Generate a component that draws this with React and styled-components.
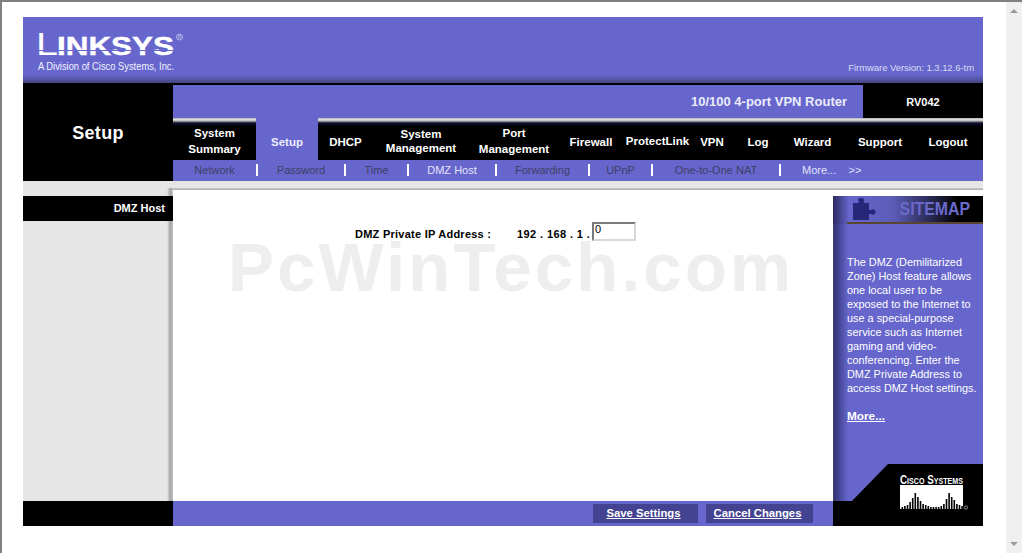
import React from 'react'
import styled, { createGlobalStyle } from 'styled-components'

const Global = createGlobalStyle`
html, body { margin: 0; padding: 0; background: #fff; overflow: hidden; }
body { font-family: "Liberation Sans", Arial, sans-serif; }
`

const Win = styled.div`
width: 1022px;
height: 553px;
box-sizing: border-box;
display: flex;
border-top: 2px solid #808080;
border-left: 2px solid #808080;
background: #fff;
`
const Viewport = styled.div`
flex: 1;
padding: 15px 0 0 21px;
`
const Scrollbar = styled.div`
width: 16px;
background: #f0f0f0;
display: flex;
flex-direction: column;
justify-content: space-between;
align-items: center;
padding: 7px 0;
box-sizing: border-box;
`
const ScrollArrow = styled.div`
width: 0;
height: 0;
border-left: 4px solid transparent;
border-right: 4px solid transparent;
border-top: ${p => p.$up ? 0 : '4px solid #9a9a9a'};
border-bottom: ${p => p.$up ? '4px solid #9a9a9a' : 0};
`
const Page = styled.div`
width: 960px;
`
const Header = styled.div`
height: 66px;
background: linear-gradient(to bottom, #6666cc 0, #6666cc 58px, #5a5ab0 61px, #44447f 66px);
display: flex;
justify-content: space-between;
padding: 9px 9px 0 15px;
box-sizing: border-box;
`
const LogoBox = styled.div`
display: flex;
flex-direction: column;
`
const LogoMark = styled.svg`
margin-left: -3px;
`
const Tagline = styled.div`
color: #f2f2ff;
font-size: 11px;
line-height: 12px;
margin-top: -2px;
white-space: nowrap;
transform: scaleX(0.85);
transform-origin: left center;
`
const Firmware = styled.div`
align-self: flex-end;
margin-bottom: 9px;
color: #dcdcf4;
font-size: 9.5px;
line-height: 12px;
letter-spacing: -0.05px;
`
const Masthead = styled.div`
display: grid;
grid-template-columns: 150px 810px;
height: 98px;
background: #000;
`
const SectionName = styled.div`
display: flex;
align-items: center;
justify-content: center;
color: #fff;
font-size: 18px;
font-weight: bold;
letter-spacing: 0.3px;
padding-top: 3px;
`
const MastRight = styled.div`
padding-top: 2px;
display: flex;
flex-direction: column;
`
const TitleRow = styled.div`
height: 33px;
display: flex;
`
const ProductName = styled.div`
width: 690px;
background: #6666cc;
color: #ececfa;
font-size: 13px;
font-weight: bold;
display: flex;
align-items: center;
justify-content: flex-end;
padding-right: 16px;
box-sizing: border-box;
`
const ModelName = styled.div`
flex: 1;
color: #fff;
font-size: 11px;
font-weight: bold;
display: flex;
align-items: center;
justify-content: center;
padding-top: 1px;
`
const Nav = styled.div`
height: 42px;
display: flex;
background: linear-gradient(to bottom, #9a9a9a 0, #e6e6e6 1px, #b8b8b8 3px, #555 4px, #101040 5px, #000 8px);
`
const NavItem = styled.div`
width: ${p => p.$w}px;
background: ${p => p.$active ? '#6666cc' : 'transparent'};
color: ${p => p.$active ? '#eeeeff' : '#fff'};
font-size: 11.5px;
font-weight: bold;
line-height: ${p => p.$lh || 15}px;
text-align: center;
padding-top: ${p => p.$top}px;
box-sizing: border-box;
white-space: nowrap;
`
const SubNav = styled.div`
height: 21px;
background: #6666cc;
display: flex;
align-items: center;
padding-bottom: 1px;
box-sizing: border-box;
`
const SubItem = styled.div`
width: ${p => p.$w}px;
height: 12px;
box-sizing: border-box;
border-right: ${p => p.$last ? 0 : 2}px solid #fff;
color: ${p => p.$on ? '#e4e4fa' : '#3f3f66'};
font-size: 11px;
line-height: 12px;
text-align: ${p => p.$pad ? 'left' : 'center'};
padding-left: ${p => p.$pad || 0}px;
white-space: nowrap;
`
const Body = styled.div`
display: grid;
grid-template-columns: 150px 660px 150px;
grid-template-rows: 15px 305px 25px;
`
const Rail = styled.div`
grid-column: 1;
grid-row: 1 / 3;
padding-top: 15px;
background:
  linear-gradient(to right, transparent 0, transparent 144px, #a8a8a8 147px, #b0b0b0 149px, #d0d0d0 150px) 0 7px no-repeat,
  #e6e6e6;
`
const RailTitle = styled.div`
height: 25px;
background: #000;
color: #fff;
font-size: 11px;
font-weight: bold;
display: flex;
align-items: center;
justify-content: flex-end;
padding: 0 8px 2px 0;
box-sizing: border-box;
`
const Band = styled.div`
grid-column: 2 / 4;
grid-row: 1;
background: linear-gradient(to bottom, #e6e6e6 0, #e6e6e6 7px, #a4a4a4 8px, #c4c4c4 9px, #fff 9px);
`
const Content = styled.div`
grid-column: 2;
grid-row: 2;
position: relative;
background: #fff;
overflow: hidden;
`
const Watermark = styled.div`
position: absolute;
left: 55px;
top: 46px;
color: #eeeeee;
font-size: 69px;
font-weight: bold;
letter-spacing: 3px;
line-height: 52px;
white-space: nowrap;
`
const FieldRow = styled.div`
display: flex;
align-items: flex-start;
padding: 26px 0 0 182px;
position: relative;
`
const FieldLabel = styled.div`
width: 162px;
padding-top: 5px;
color: #000;
font-size: 11px;
font-weight: bold;
letter-spacing: 0.25px;
line-height: 14px;
white-space: nowrap;
`
const Octets = styled.div`
width: 75px;
padding-top: 5px;
color: #000;
font-size: 11px;
font-weight: bold;
letter-spacing: 0.4px;
line-height: 14px;
white-space: pre;
`
const IpInput = styled.input`
width: 44px;
height: 19px;
box-sizing: border-box;
border: 2px solid;
border-color: #7a7a7a #d8d8d8 #d8d8d8 #7a7a7a;
font-family: "Liberation Sans", Arial, sans-serif;
font-size: 11px;
padding: 0 0 5px 1px;
color: #000;
background: #fff;
outline: none;
`
const Sidebar = styled.div`
grid-column: 3;
grid-row: 2 / 4;
display: flex;
flex-direction: column;
background: linear-gradient(to right, #555 0, #333377 1px, #6666cc 15px);
`
const SitemapHead = styled.div`
height: 28px;
box-sizing: border-box;
display: flex;
align-items: center;
justify-content: space-between;
padding: 0 13px 2px 20px;
background:
  linear-gradient(to top, #5a4630 0, #5a4630 2px, transparent 2px) 14px 0 no-repeat,
  linear-gradient(to right, #2a2a60 0, #6666cc 16px, #5c5cb8 60px, #26264c 100px, #000 125px);
`
const SitemapTitle = styled.div`
color: #6a6acc;
font-size: 18px;
font-weight: bold;
transform: scaleX(0.88);
transform-origin: right center;
`
const SideText = styled.div`
padding: 31px 0 0 14px;
color: #fff;
font-size: 10.9px;
line-height: 14px;
white-space: nowrap;
flex: 1;
`
const MoreLink = styled.a`
display: inline-block;
margin-top: 14px;
color: #fff;
font-size: 11.8px;
font-weight: bold;
text-decoration: underline;
`
const CiscoCorner = styled.div`
height: 62px;
position: relative;
display: flex;
justify-content: flex-end;
padding: 8px 11px 0 0;
box-sizing: border-box;
&::before {
  content: '';
  position: absolute;
  inset: 0;
  background: #000;
  clip-path: polygon(19px 37px, 55px 0, 150px 0, 150px 62px, 0 62px, 0 37px);
}
`
const CiscoMark = styled.svg`
position: relative;
`
const FootLeft = styled.div`
grid-column: 1;
grid-row: 3;
background: #000;
`
const FootBar = styled.div`
grid-column: 2;
grid-row: 3;
background: #6666cc;
display: flex;
justify-content: flex-end;
align-items: center;
gap: 8px;
padding: 0 20px 1px 0;
`
const ActionButton = styled.a`
width: ${p => p.$w}px;
height: 19px;
box-sizing: border-box;
padding-right: 4px;
background: #434392;
color: #fff;
font-size: 11.3px;
font-weight: bold;
text-decoration: underline;
display: flex;
align-items: center;
justify-content: center;
`

const Logo = () => (
  <LogoMark width="149" height="36" viewBox="0 0 149 36">
    <text x="1" y="29" fill="#fff" fontFamily="Liberation Sans" fontWeight="400" fontSize="32" textLength="22" lengthAdjust="spacingAndGlyphs">L</text>
    <text x="22" y="29" fill="#fff" stroke="#fff" strokeWidth="0.4" fontFamily="Liberation Sans" fontWeight="700" fontSize="25" textLength="117" lengthAdjust="spacingAndGlyphs">INKSYS</text>
    <rect x="3" y="24" width="137" height="1" fill="#6666cc" />
    <circle cx="144.5" cy="11" r="3" fill="none" stroke="#c8c8ee" strokeWidth="0.8" />
    <text x="142.8" y="13" fill="#c8c8ee" fontFamily="Liberation Sans" fontSize="5">R</text>
  </LogoMark>
)

const Puzzle = () => (
  <svg width="23" height="22" viewBox="0 0 23 22">
    <path fill="#26267a" d="M0 5H5C6 5 6 4 5.5 3C4 1 6 0 8 0C10 0 12 1 11 3C10.5 4 10.5 5 12 5H16V11C16 12 17 12.5 18 12C20 10.5 22.5 11.5 22.5 14C22.5 16.5 20 17.5 18 16C17 15.5 16 16 16 17V22H0Z" />
  </svg>
)

const ciscoBars = [2, 3, 4, 7, 11, 16, 12, 8, 5, 4, 3, 2, 2, 2, 2, 3, 5, 10, 16, 12, 9, 5, 4, 3]

const CiscoLogo = () => (
  <CiscoMark width="72" height="40" viewBox="0 0 72 40">
    <text x="0" y="12" fill="#fff" fontFamily="Liberation Sans" fontWeight="700" fontSize="12.5" fontVariant="small-caps" textLength="63" lengthAdjust="spacingAndGlyphs">Cisco Systems</text>
    <rect x="0" y="13" width="63" height="24" fill="#fff" />
    {ciscoBars.map((h, i) => (
      <rect key={i} x={1.5 + i * 2.6} y={37 - h} width="1.6" height={h} fill="#000" />
    ))}
    <circle cx="66" cy="35.5" r="1.6" fill="none" stroke="#ccc" strokeWidth="0.7" />
  </CiscoMark>
)

const navItems = [
  { w: 83, top: 7, lines: ['System', 'Summary'], lh: 16 },
  { w: 62, top: 17, lines: ['Setup'], active: true },
  { w: 55, top: 17, lines: ['DHCP'] },
  { w: 96, top: 9, lines: ['System', 'Management'], lh: 14 },
  { w: 90, top: 7, lines: ['Port', 'Management'], lh: 16 },
  { w: 64, top: 17, lines: ['Firewall'] },
  { w: 69, top: 16, lines: ['ProtectLink'] },
  { w: 40, top: 17, lines: ['VPN'] },
  { w: 52, top: 17, lines: ['Log'] },
  { w: 57, top: 17, lines: ['Wizard'] },
  { w: 78, top: 17, lines: ['Support'] },
  { w: 58, top: 17, lines: ['Logout'] },
]

const subItems = [
  { w: 85, label: 'Network' },
  { w: 88, label: 'Password' },
  { w: 63, label: 'Time' },
  { w: 88, label: 'DMZ Host', on: true },
  { w: 93, label: 'Forwarding' },
  { w: 63, label: 'UPnP' },
  { w: 128, label: 'One-to-One NAT' },
  { w: 64, label: 'More...', on: true, last: true, pad: 21 },
  { w: 20, label: '>>', on: true, last: true },
]

const helpLines = [
  'The DMZ (Demilitarized',
  'Zone) Host feature allows',
  'one local user to be',
  'exposed to the Internet to',
  'use a special-purpose',
  'service such as Internet',
  'gaming and video-',
  'conferencing. Enter the',
  'DMZ Private Address to',
  'access DMZ Host settings.',
]

export default function App() {
  return (
    <Win>
      <Global />
      <Viewport>
        <Page>
          <Header>
            <LogoBox>
              <Logo />
              <Tagline>A Division of Cisco Systems, Inc.</Tagline>
            </LogoBox>
            <Firmware>Firmware Version: 1.3.12.6-tm</Firmware>
          </Header>
          <Masthead>
            <SectionName>Setup</SectionName>
            <MastRight>
              <TitleRow>
                <ProductName>10/100 4-port VPN Router</ProductName>
                <ModelName>RV042</ModelName>
              </TitleRow>
              <Nav>
                {navItems.map(item => (
                  <NavItem key={item.lines.join()} $w={item.w} $top={item.top} $lh={item.lh} $active={item.active}>
                    {item.lines.map(line => <div key={line}>{line}</div>)}
                  </NavItem>
                ))}
              </Nav>
              <SubNav>
                {subItems.map(item => (
                  <SubItem key={item.label} $w={item.w} $on={item.on} $last={item.last} $pad={item.pad}>{item.label}</SubItem>
                ))}
              </SubNav>
            </MastRight>
          </Masthead>
          <Body>
            <Rail>
              <RailTitle>DMZ Host</RailTitle>
            </Rail>
            <Band />
            <Content>
              <Watermark>PcWinTech.com</Watermark>
              <FieldRow>
                <FieldLabel>DMZ Private IP Address :</FieldLabel>
                <Octets>192 . 168 . 1 .</Octets>
                <IpInput readOnly defaultValue="0" />
              </FieldRow>
            </Content>
            <Sidebar>
              <SitemapHead>
                <Puzzle />
                <SitemapTitle>SITEMAP</SitemapTitle>
              </SitemapHead>
              <SideText>
                {helpLines.map(line => <div key={line}>{line}</div>)}
                <MoreLink>More...</MoreLink>
              </SideText>
              <CiscoCorner>
                <CiscoLogo />
              </CiscoCorner>
            </Sidebar>
            <FootLeft />
            <FootBar>
              <ActionButton $w={105}>Save Settings</ActionButton>
              <ActionButton $w={107}>Cancel Changes</ActionButton>
            </FootBar>
          </Body>
        </Page>
      </Viewport>
      <Scrollbar>
        <ScrollArrow $up />
        <ScrollArrow />
      </Scrollbar>
    </Win>
  )
}
